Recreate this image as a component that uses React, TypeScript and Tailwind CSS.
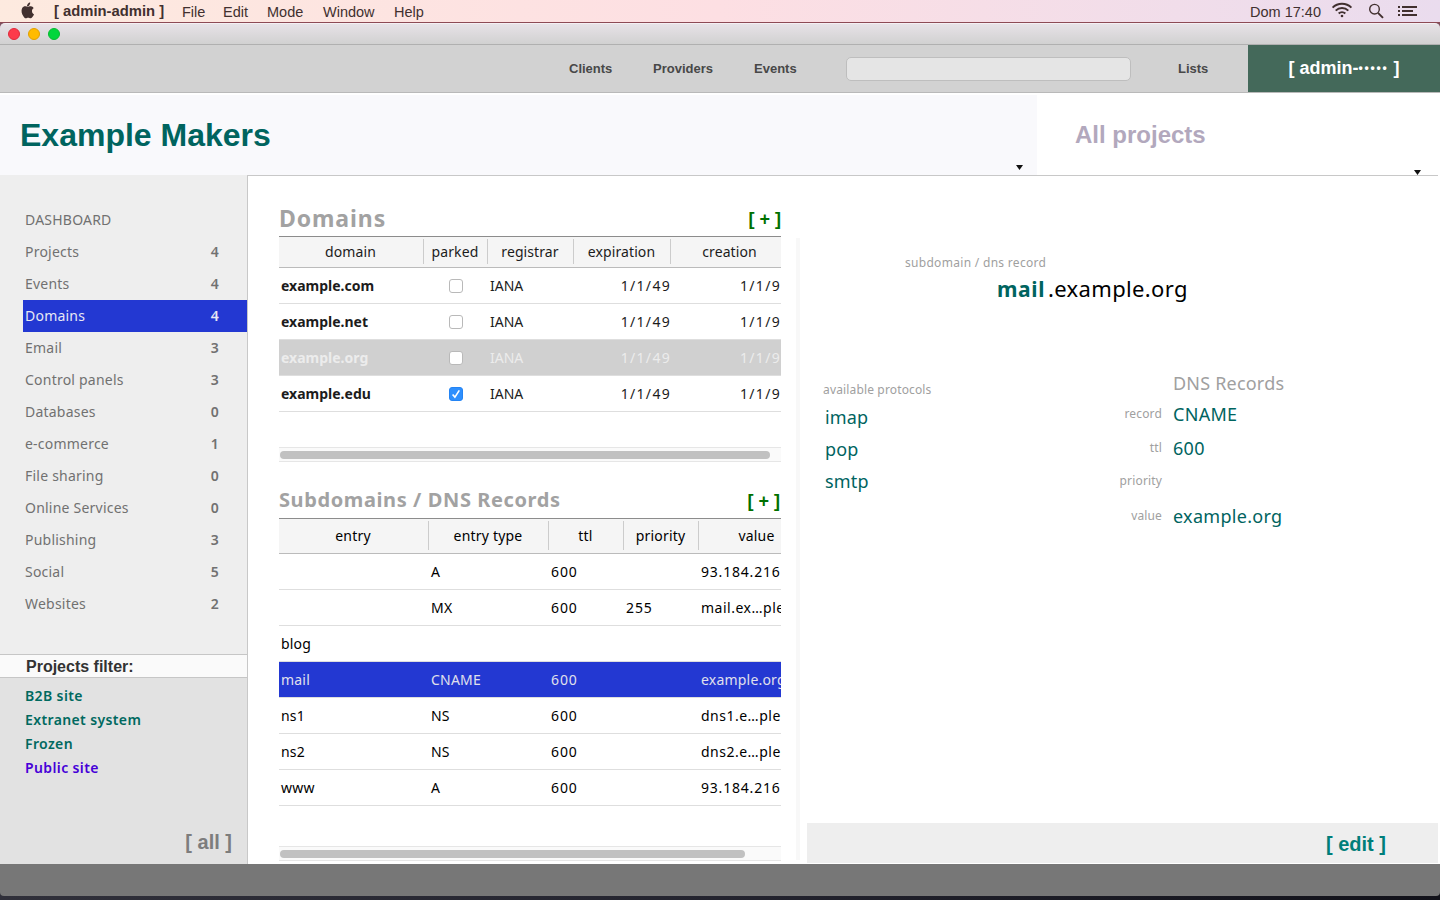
import { ReactNode } from 'react';

interface NavItem {
  label: string;
  count?: number;
}

interface Domain {
  name: string;
  parked: boolean;
  registrar: string;
  expiration: string;
  creation: string;
}

interface DnsEntry {
  entry: string;
  type: string;
  ttl: string;
  priority: string;
  value: string;
}

const navItems: NavItem[] = [
  { label: 'DASHBOARD' },
  { label: 'Projects', count: 4 },
  { label: 'Events', count: 4 },
  { label: 'Domains', count: 4 },
  { label: 'Email', count: 3 },
  { label: 'Control panels', count: 3 },
  { label: 'Databases', count: 0 },
  { label: 'e-commerce', count: 1 },
  { label: 'File sharing', count: 0 },
  { label: 'Online Services', count: 0 },
  { label: 'Publishing', count: 3 },
  { label: 'Social', count: 5 },
  { label: 'Websites', count: 2 },
];

const filters = ['B2B site', 'Extranet system', 'Frozen', 'Public site'];

const domains: Domain[] = [
  { name: 'example.com', parked: false, registrar: 'IANA', expiration: '1/1/49', creation: '1/1/9' },
  { name: 'example.net', parked: false, registrar: 'IANA', expiration: '1/1/49', creation: '1/1/9' },
  { name: 'example.org', parked: false, registrar: 'IANA', expiration: '1/1/49', creation: '1/1/9' },
  { name: 'example.edu', parked: true, registrar: 'IANA', expiration: '1/1/49', creation: '1/1/9' },
];

const entries: DnsEntry[] = [
  { entry: '', type: 'A', ttl: '600', priority: '', value: '93.184.216' },
  { entry: '', type: 'MX', ttl: '600', priority: '255', value: 'mail.ex…ple' },
  { entry: 'blog', type: '', ttl: '', priority: '', value: '' },
  { entry: 'mail', type: 'CNAME', ttl: '600', priority: '', value: 'example.org' },
  { entry: 'ns1', type: 'NS', ttl: '600', priority: '', value: 'dns1.e…ple' },
  { entry: 'ns2', type: 'NS', ttl: '600', priority: '', value: 'dns2.e…ple' },
  { entry: 'www', type: 'A', ttl: '600', priority: '', value: '93.184.216' },
];

const MenuBar = () => (
  <div className="flex h-[23px] shrink-0 items-center border-b border-[#8d4a55] bg-linear-to-r from-[#fdeadf] via-[#fddfe3] to-[#eadcee] text-[14.5px] leading-5 text-[#41302f]">
    <svg className="ml-5 h-[17px] w-[15px] -translate-y-[1px]" viewBox="0 0 15 17" fill="currentColor">
      <path d="M10.2 0.6c.1 1.2-.4 2.1-1 2.8-.7.7-1.500 1.100-2.300 1 0-1.100.4-2 1-2.700.6-.6 1.500-1.100 2.300-1.100zM13.600 6.300c-1.100.7-1.700 1.600-1.600 2.900 0 1.400.7 2.400 2 3-.3 1-.9 2-1.600 2.900-.6.8-1.200 1.200-1.900 1.200-.8 0-1.300-.5-2.300-.5s-1.600.5-2.300.5c-.8 0-1.400-.5-2.200-1.500C1.500 12 .900 8.200 2.200 6c.7-1.100 1.800-1.700 3-1.700 1 0 1.900.6 2.500.6.700 0 1.800-.7 3.200-.6 1.100.1 2.100.5 2.700 2z" />
    </svg>
    <span className="ml-[19px] w-[128px] text-[14.8px] font-bold">[ admin-admin ]</span>
    <span className="w-[41px] pt-[1px]">File</span>
    <span className="w-[44px] pt-[1px]">Edit</span>
    <span className="w-[56px] pt-[1px]">Mode</span>
    <span className="w-[71px] pt-[1px]">Window</span>
    <span className="pt-[1px]">Help</span>
    <span className="ml-auto pt-[1px]">Dom 17:40</span>
    <svg className="ml-[10px] h-[16px] w-[22px] -translate-y-[1px]" viewBox="0 0 22 16" fill="none" stroke="currentColor" strokeWidth="2">
      <path d="M1.600 5.600a13.300 13.300 0 0 1 18.800 0M4.700 8.600a9 9 0 0 1 12.600 0M7.700 11.500a4.700 4.700 0 0 1 6.600 0" />
      <circle cx="11" cy="14" r="1.300" fill="currentColor" stroke="none" />
    </svg>
    <svg className="ml-[15px] h-[16px] w-[16px]" viewBox="0 0 16 16" fill="none" stroke="currentColor" strokeWidth="1.400">
      <circle cx="6.500" cy="6.200" r="4.800" />
      <path d="M10 9.800l5 5" strokeWidth="1.900" />
    </svg>
    <svg className="ml-[14px] mr-[23px] h-[12px] w-[19px]" viewBox="0 0 19 12" fill="currentColor">
      <path d="M0 1h2v2H0zM4 1h15v2H4zM0 5h2v2H0zM4 5h11v2H4zM0 9h2v2H0zM4 9h15v2H4z" />
    </svg>
  </div>
);

const TitleBar = () => (
  <div className="h-[22px] shrink-0 bg-[#7d5060]">
    <div className="flex h-full items-center gap-2 rounded-t-[5px] border-b border-t border-b-[#b0b0b0] border-t-[#f4f0f4] bg-linear-to-b from-[#e7e2e7] to-[#d1d1d1] pl-2">
      <span className="h-3 w-3 rounded-full border border-[#e02a3c] bg-[#fd3b4b]"></span>
      <span className="h-3 w-3 rounded-full border border-[#e2a000] bg-[#ffbb00]"></span>
      <span className="h-3 w-3 rounded-full border border-[#08ba30] bg-[#02d63c]"></span>
    </div>
  </div>
);

const Toolbar = () => (
  <div className="flex h-12 shrink-0 items-center border-b border-[#b9b9b9] bg-[#d2d2d2] pl-[569px] text-[13px] font-bold text-[#484848]">
    <span className="w-[84px] pt-[1px]">Clients</span>
    <span className="w-[101px] pt-[1px]">Providers</span>
    <span className="w-[92px] pt-[1px]">Events</span>
    <div className="h-6 w-[285px] rounded-[5px] border border-[#bebebe] bg-[#e5e5e5]"></div>
    <span className="ml-[47px] pt-[1px]">Lists</span>
    <div className="ml-auto flex h-full w-48 items-center justify-center bg-[#44695a] pb-[1px] text-lg text-white">
      <span>[ admin-</span>
      <span className="text-[12px] tracking-[1.8px]">•••••</span>
      <span className="whitespace-pre"> ]</span>
    </div>
  </div>
);

const Caret = () => (
  <svg className="h-[5px] w-[7px]" viewBox="0 0 7 5">
    <path d="M0 0h7L3.500 5z" fill="#111" />
  </svg>
);

const Sidebar = () => (
  <div className="flex w-[248px] shrink-0 flex-col border-r border-[#c8c8c8] bg-[#eeeeee]">
    <div className="h-[479px] pt-[29px]">
      {navItems.map((item) => (
        <div
          key={item.label}
          className={`ml-[23px] flex h-8 items-center justify-between pl-[2px] pr-7 tracking-[0.22px] ${
            item.label === 'Domains' ? 'bg-[#2338d2] text-[#e8e8f4]' : 'text-[#717171]'
          }`}
        >
          <span>{item.label}</span>
          {item.count !== undefined && <span className="font-semibold">{item.count}</span>}
        </div>
      ))}
    </div>
    <div className="h-6 border-y border-[#c6c6c6] bg-[#fafafa] pl-[26px] font-['Liberation_Sans',sans-serif] text-base font-bold leading-[24px] text-[#333]">
      Projects filter:
    </div>
    <div className="flex flex-1 flex-col bg-[#e2e2e2] pt-[6px]">
      {filters.map((f) => (
        <div
          key={f}
          className={`h-6 pl-[25px] font-semibold leading-6 tracking-[0.38px] ${f === 'Public site' ? 'text-[#4600d8]' : 'text-[#00695f]'}`}
        >
          {f}
        </div>
      ))}
      <div className="mb-2 mr-[15px] mt-auto text-right font-['Liberation_Sans',sans-serif] text-xl font-bold text-[#7d7d7d]">
        [ all ]
      </div>
    </div>
  </div>
);

const Heading = ({ className, children }: { className: string; children: ReactNode }) => (
  <div className={`flex justify-between border-b border-[#8c8c8c] font-bold text-[#a2a2a2] ${className}`}>
    <h2>{children}</h2>
    <button className="whitespace-pre font-['Liberation_Sans',sans-serif] text-lg font-bold tracking-normal text-[#007000]">
      [ + ]
    </button>
  </div>
);

const Scrollbar = ({ thumb }: { thumb: string }) => (
  <div className="h-[15px] border-y border-[#e6e6e6] bg-[#fafafa] pl-[1px] pt-[3px]">
    <div className={`h-2 rounded-full bg-[#c1c1c1] ${thumb}`}></div>
  </div>
);

const Checkbox = ({ checked }: { checked: boolean }) => (
  <span
    className={`flex h-[14px] w-[14px] items-center justify-center rounded-[3px] border ${
      checked ? 'border-[#2484f4] bg-[#2f8ffd]' : 'border-[#b9b9b9] bg-white'
    }`}
  >
    {checked && (
      <svg className="h-[10px] w-[10px]" viewBox="0 0 10 10" fill="none" stroke="white" strokeWidth="1.600">
        <path d="M1.600 5.500l2.300 2.600L8.300 1.400" />
      </svg>
    )}
  </span>
);

const DomainsTable = () => (
  <div className="overflow-hidden text-[#1c1c1c]">
    <div className="grid h-[31px] w-[512px] grid-cols-[145px_64px_86px_97px_118px] border-b border-[#bbb] bg-[#f5f5f5] pt-[2px] text-center leading-[26px] tracking-[0.1px] *:pr-[1px]">
      <span className="h-[25px] border-r border-[#ccc]">domain</span>
      <span className="h-[25px] border-r border-[#ccc]">parked</span>
      <span className="h-[25px] border-r border-[#ccc]">registrar</span>
      <span className="h-[25px] border-r border-[#ccc]">expiration</span>
      <span>creation</span>
    </div>
    {domains.map((d) => (
      <div
        key={d.name}
        className={`grid h-9 grid-cols-[145px_64px_86px_97px_110px] items-center border-b border-[#dedede] ${
          d.name === 'example.org' ? 'bg-[#d0d0d0] text-[#ececec]' : ''
        }`}
      >
        <span className="pl-[2px] font-bold">{d.name}</span>
        <span className="flex justify-center pr-[1px]">
          <Checkbox checked={d.parked} />
        </span>
        <span className="pl-[2px]">{d.registrar}</span>
        <span className="text-right tracking-[1.3px]">{d.expiration}</span>
        <span className="text-right tracking-[1.3px]">{d.creation}</span>
      </div>
    ))}
  </div>
);

const EntriesTable = () => (
  <div className="overflow-hidden text-black">
    <div className="grid h-[35px] w-[536px] grid-cols-[150px_120px_75px_75px_116px] border-b border-[#bbb] bg-[#f5f5f5] pt-[2px] text-center leading-[30px] tracking-[0.2px] *:pr-[1px]">
      <span className="h-[29px] border-r border-[#ccc]">entry</span>
      <span className="h-[29px] border-r border-[#ccc]">entry type</span>
      <span className="h-[29px] border-r border-[#ccc]">ttl</span>
      <span className="h-[29px] border-r border-[#ccc]">priority</span>
      <span>value</span>
    </div>
    {entries.map((e, i) => (
      <div
        key={i}
        className={`grid h-9 grid-cols-[150px_120px_75px_75px_82px] items-center border-b border-[#dedede] *:pl-[2px] ${
          e.entry === 'mail' ? 'bg-[#2338d2] text-[#e0e0ec]' : ''
        }`}
      >
        <span className="tracking-[0.2px]">{e.entry}</span>
        <span className="tracking-[0.2px]">{e.type}</span>
        <span className="tracking-[0.9px]">{e.ttl}</span>
        <span className="tracking-[0.9px]">{e.priority}</span>
        <span className={`whitespace-nowrap ${/^\d/.test(e.value) ? 'tracking-[0.8px]' : e.entry === 'mail' ? 'tracking-[0.2px]' : 'tracking-[0.5px]'}`}>
          {e.value}
        </span>
      </div>
    ))}
  </div>
);

const DetailRow = ({ label, value, className }: { label: string; value: string; className: string }) => (
  <div className={`flex items-center ${className}`}>
    <span className="w-[155px] text-right text-xs tracking-[0.15px] text-[#a0a0a0]">{label}</span>
    <span className="ml-[11px] text-lg tracking-[0.3px] text-[#00645f]">{value}</span>
  </div>
);

const DetailPanel = () => (
  <div className="flex w-[631px] flex-col">
    <div className="flex-1">
      <div className="pl-[98px] pt-[78px] text-xs leading-[18px] tracking-[0.3px] text-[#a0a0a0]">subdomain / dns record</div>
      <div className="flex h-[34px] items-center pl-[190px] text-[22px] tracking-[0.35px] text-black">
        <span className="w-[51px] text-[21px] font-bold tracking-[0.6px] text-[#00645f]">mail</span>
        <span>.example.org</span>
      </div>
      <div className="flex pt-[61px]">
        <div className="w-[200px] pt-[14px]">
          <div className="pl-4 text-xs leading-[18px] tracking-[0.15px] text-[#a0a0a0]">available protocols</div>
          <div className="pl-[18px] pt-[2px] text-lg leading-8 tracking-[0.15px] text-[#00645f]">
            <div>imap</div>
            <div>pop</div>
            <div>smtp</div>
          </div>
        </div>
        <div>
          <div className="h-[31px] pl-[166px] text-lg leading-[32px] tracking-[0.2px] text-[#a0a0a0]">DNS Records</div>
          <DetailRow label="record" value="CNAME" className="h-8" />
          <DetailRow label="ttl" value="600" className="h-9" />
          <DetailRow label="priority" value="" className="h-[30px]" />
          <DetailRow label="value" value="example.org" className="h-[40px]" />
        </div>
      </div>
    </div>
    <div className="mb-[1px] flex h-10 items-center justify-end bg-[#eeeeee] pr-[52px] pt-[2px] font-['Liberation_Sans',sans-serif] text-xl font-bold text-[#007e7a]">
      [ edit ]
    </div>
  </div>
);

const App = () => {
  return (
    <div className="flex h-[900px] w-[1440px] flex-col overflow-hidden bg-white font-['Liberation_Sans',Arial,sans-serif]">
      <MenuBar />
      <TitleBar />
      <Toolbar />

      {/* customer / project selectors */}
      <div className="flex h-[82px] shrink-0 pt-[2px]">
        <div className="flex w-[1037px] items-center justify-between bg-[#f9f9fc] pl-5 pr-[14px]">
          <h1 className="text-[32px] font-bold text-[#00645f]">Example Makers</h1>
          <div className="mt-[64px]">
            <Caret />
          </div>
        </div>
        <div className="flex flex-1 items-center justify-between pl-[38px] pr-[19px]">
          <span className="text-2xl font-bold text-[#b2a8bd]">All projects</span>
          <div className="mt-[74px]">
            <Caret />
          </div>
        </div>
      </div>

      <div className="flex h-[689px] shrink-0 font-['Noto_Sans',sans-serif] text-sm">
        <Sidebar />
        <div className="mr-[3px] flex flex-1 border-t border-[#c8c8c8]">
          <div className="ml-[31px] w-[502px]">
            <Heading className="h-[61px] pt-[25px] text-[23px] leading-[34px] tracking-[0.9px]">Domains</Heading>
            <DomainsTable />
            <div className="h-[35px]"></div>
            <Scrollbar thumb="w-[490px]" />
            <Heading className="h-[57px] pr-[1px] pt-[21px] text-[20px] leading-[34px] tracking-[0.6px]">Subdomains / DNS Records</Heading>
            <EntriesTable />
            <div className="h-10"></div>
            <Scrollbar thumb="w-[465px]" />
          </div>
          <div className="ml-[15px] mr-[7px] mt-[62px] h-[622px] w-1 bg-[#f8f8f8]"></div>
          <DetailPanel />
        </div>
      </div>

      <div className="flex-1 bg-linear-to-r from-[#30303a] via-[#24242f] to-[#12121a]">
        <div className="h-8 rounded-b-[4px] bg-[#777777]"></div>
      </div>
    </div>
  );
};

export default App;
